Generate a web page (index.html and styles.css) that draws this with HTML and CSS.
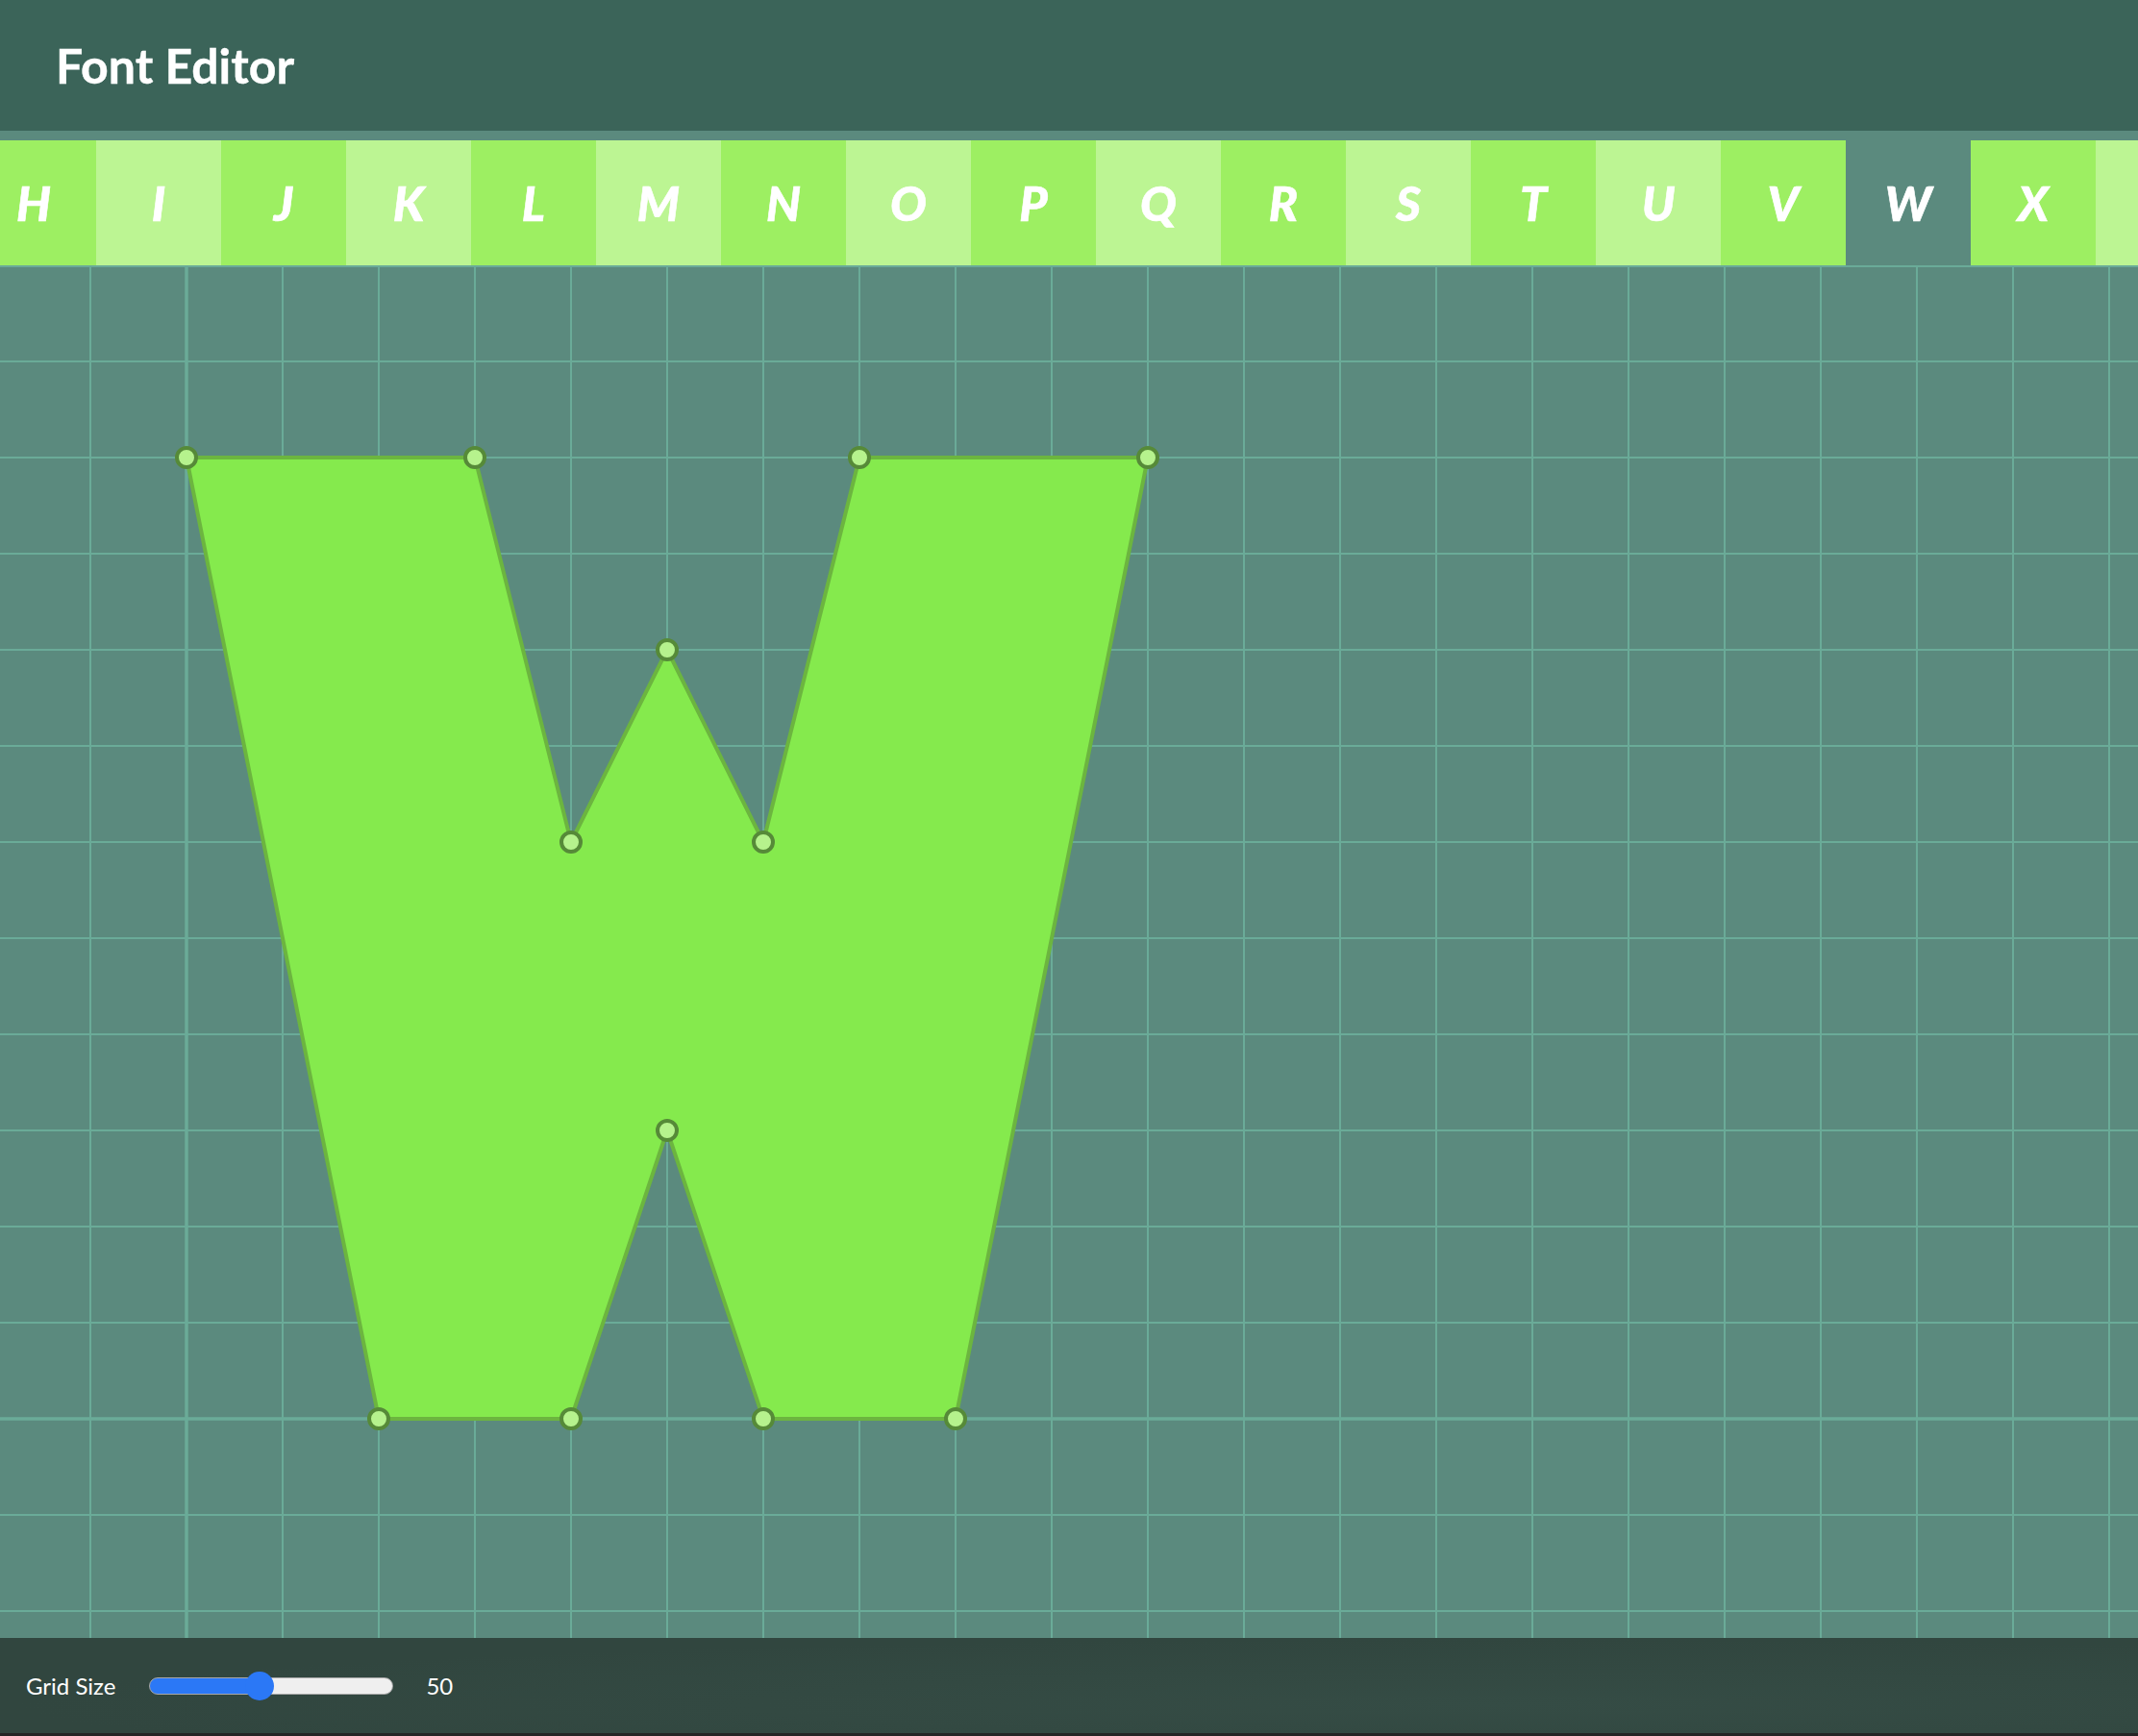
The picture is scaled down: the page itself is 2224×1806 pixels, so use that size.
FILE: index.html
```html
<!DOCTYPE html>
<html lang="en">
<head>
<meta charset="utf-8">
<title>Font Editor</title>
<link rel="stylesheet" href="styles.css">
</head>
<body>
<div class="app">
  <header class="header">
    <h1 class="title">Font Editor</h1>
  </header>
  <nav class="tabs">
    <div class="tab dark">H</div>
    <div class="tab light">I</div>
    <div class="tab dark">J</div>
    <div class="tab light">K</div>
    <div class="tab dark">L</div>
    <div class="tab light">M</div>
    <div class="tab dark">N</div>
    <div class="tab light">O</div>
    <div class="tab dark">P</div>
    <div class="tab light">Q</div>
    <div class="tab dark">R</div>
    <div class="tab light">S</div>
    <div class="tab dark">T</div>
    <div class="tab light">U</div>
    <div class="tab dark">V</div>
    <div class="tab selected">W</div>
    <div class="tab dark">X</div>
    <div class="tab light"></div>
  </nav>
  <main class="canvas">
    <svg class="board" width="2224" height="1428" viewBox="0 0 2224 1428" xmlns="http://www.w3.org/2000/svg">
      <g class="grid">
        <line x1="94" y1="0" x2="94" y2="1428"/>
        <line x1="294" y1="0" x2="294" y2="1428"/>
        <line x1="394" y1="0" x2="394" y2="1428"/>
        <line x1="494" y1="0" x2="494" y2="1428"/>
        <line x1="594" y1="0" x2="594" y2="1428"/>
        <line x1="694" y1="0" x2="694" y2="1428"/>
        <line x1="794" y1="0" x2="794" y2="1428"/>
        <line x1="894" y1="0" x2="894" y2="1428"/>
        <line x1="994" y1="0" x2="994" y2="1428"/>
        <line x1="1094" y1="0" x2="1094" y2="1428"/>
        <line x1="1194" y1="0" x2="1194" y2="1428"/>
        <line x1="1294" y1="0" x2="1294" y2="1428"/>
        <line x1="1394" y1="0" x2="1394" y2="1428"/>
        <line x1="1494" y1="0" x2="1494" y2="1428"/>
        <line x1="1594" y1="0" x2="1594" y2="1428"/>
        <line x1="1694" y1="0" x2="1694" y2="1428"/>
        <line x1="1794" y1="0" x2="1794" y2="1428"/>
        <line x1="1894" y1="0" x2="1894" y2="1428"/>
        <line x1="1994" y1="0" x2="1994" y2="1428"/>
        <line x1="2094" y1="0" x2="2094" y2="1428"/>
        <line x1="2194" y1="0" x2="2194" y2="1428"/>
        <line x1="0" y1="1" x2="2224" y2="1"/>
        <line x1="0" y1="100" x2="2224" y2="100"/>
        <line x1="0" y1="200" x2="2224" y2="200"/>
        <line x1="0" y1="300" x2="2224" y2="300"/>
        <line x1="0" y1="400" x2="2224" y2="400"/>
        <line x1="0" y1="500" x2="2224" y2="500"/>
        <line x1="0" y1="600" x2="2224" y2="600"/>
        <line x1="0" y1="700" x2="2224" y2="700"/>
        <line x1="0" y1="800" x2="2224" y2="800"/>
        <line x1="0" y1="900" x2="2224" y2="900"/>
        <line x1="0" y1="1000" x2="2224" y2="1000"/>
        <line x1="0" y1="1100" x2="2224" y2="1100"/>
        <line x1="0" y1="1300" x2="2224" y2="1300"/>
        <line x1="0" y1="1400" x2="2224" y2="1400"/>
      </g>
      <g class="axes">
        <line x1="194" y1="0" x2="194" y2="1428"/>
        <line x1="0" y1="1200" x2="2224" y2="1200"/>
      </g>
      <polygon class="glyph" points="194,200 494,200 594,600 694,400 794,600 894,200 1194,200 994,1200 794,1200 694,900 594,1200 394,1200"/>
      <g class="handles">
        <circle cx="194" cy="200" r="10"/>
        <circle cx="494" cy="200" r="10"/>
        <circle cx="594" cy="600" r="10"/>
        <circle cx="694" cy="400" r="10"/>
        <circle cx="794" cy="600" r="10"/>
        <circle cx="894" cy="200" r="10"/>
        <circle cx="1194" cy="200" r="10"/>
        <circle cx="994" cy="1200" r="10"/>
        <circle cx="794" cy="1200" r="10"/>
        <circle cx="694" cy="900" r="10"/>
        <circle cx="594" cy="1200" r="10"/>
        <circle cx="394" cy="1200" r="10"/>
      </g>
    </svg>
  </main>
  <footer class="footer">
    <label class="label" for="grid-size">Grid Size</label>
    <input class="slider" id="grid-size" type="range" min="10" max="100" value="50">
    <span class="value">50</span>
  </footer>
</div>
</body>
</html>
```

FILE: styles.css
```css
html, body {
  margin: 0;
  padding: 0;
  height: 100%;
}

body {
  background: #5b8a7e;
  font-family: Lato, "Open Sans", "Liberation Sans", sans-serif;
  color: #ffffff;
  overflow: hidden;
}

.app {
  display: flex;
  flex-direction: column;
  height: 1806px;
  width: 2224px;
  overflow: hidden;
}

.header {
  flex: 0 0 146px;
  height: 146px;
  box-sizing: border-box;
  background: #3b6459;
  border-bottom: 10px solid #5b8a7e;
  display: flex;
  align-items: center;
  padding-left: 58px;
}

.title {
  margin: 0;
  font-size: 50px;
  font-weight: 700;
  line-height: 1;
  -webkit-text-stroke: 0.4px #ffffff;
}

.tabs {
  display: flex;
  height: 130px;
  flex: 0 0 130px;
  margin-left: -30px;
}

.tab {
  flex: 0 0 130px;
  width: 130px;
  height: 130px;
  display: flex;
  align-items: center;
  justify-content: center;
  font-size: 50px;
  font-weight: 900;
  font-style: italic;
  color: #ffffff;
  -webkit-text-stroke: 0.6px #ffffff;
}

.tab.dark {
  background: #9def62;
}

.tab.light {
  background: #bcf593;
}

.tab.selected {
  background: #5b8a7e;
}

.canvas {
  flex: 0 0 1428px;
  height: 1428px;
  background: #5b8a7e;
  overflow: hidden;
}

.board {
  display: block;
}

.grid line {
  stroke: #6aab98;
  stroke-width: 2;
}

.axes line {
  stroke: #6aab98;
  stroke-width: 3.5;
}

.glyph {
  fill: #85ea4d;
  stroke: #6cb53f;
  stroke-width: 4;
  stroke-linejoin: round;
}

.handles circle {
  fill: #b6f28d;
  stroke: #568a38;
  stroke-width: 4;
}

.footer {
  flex: 0 0 102px;
  height: 102px;
  box-sizing: border-box;
  background: radial-gradient(ellipse at 70% 70%, #354c45 0%, #31463f 70%);
  border-bottom: 3px solid #252525;
  display: flex;
  align-items: center;
  padding-left: 27px;
}

.label {
  font-size: 24px;
  font-weight: 400;
  color: #ffffff;
  margin-right: 35px;
}

.slider {
  -webkit-appearance: none;
  appearance: none;
  width: 254px;
  height: 30px;
  margin: 0 34px 0 0;
  padding: 0;
  background: transparent;
}

.slider::-webkit-slider-runnable-track {
  height: 18px;
  box-sizing: border-box;
  border-radius: 9px;
  border: 1px solid #a8a8a8;
  background: linear-gradient(to right, #2b78f6 0%, #2b78f6 44%, #efefef 44%, #efefef 100%);
}

.slider::-webkit-slider-thumb {
  -webkit-appearance: none;
  appearance: none;
  width: 30px;
  height: 30px;
  border-radius: 50%;
  background: #2b78f6;
  border: none;
  margin-top: -7px;
}

.value {
  font-size: 24px;
  font-weight: 400;
  color: #ffffff;
}
```
